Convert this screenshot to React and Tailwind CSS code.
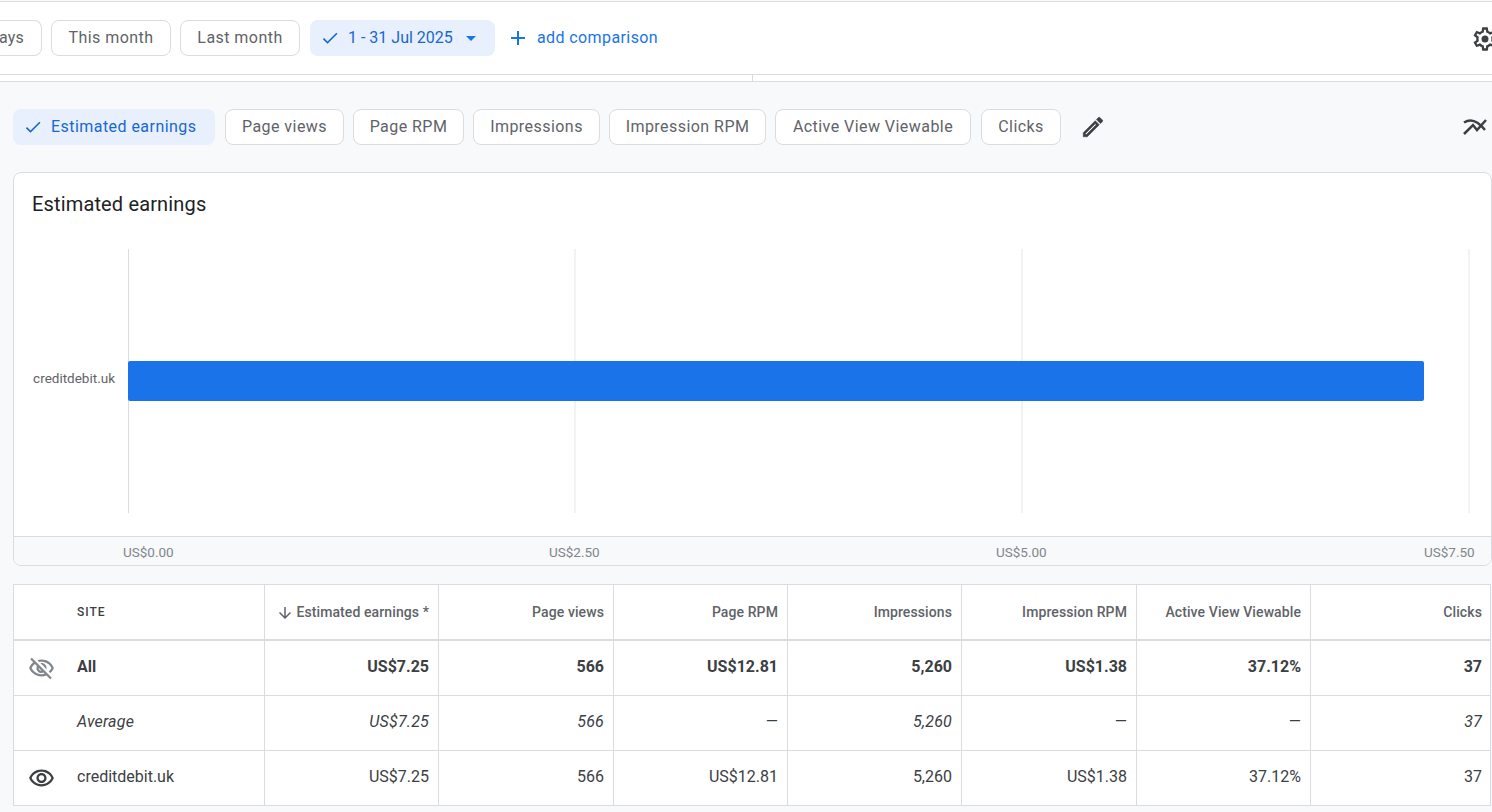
const paths = {
  check: 'M9 16.17L4.83 12l-1.42 1.41L9 19 21 7l-1.41-1.41z',
  add: 'M19 13h-6v6h-2v-6H5v-2h6V5h2v6h6v2z',
  drop: 'M7 10l5 5 5-5z',
  down: 'M20 12l-1.41-1.41L13 16.17V4h-2v12.17l-5.58-5.59L4 12l8 8 8-8z',
  edit: 'M14.06 9.02l.92.92L5.92 19H5v-.92l9.06-9.06M17.66 3c-.25 0-.51.1-.7.29l-1.83 1.83 3.75 3.75 1.83-1.83c.39-.39.39-1.02 0-1.41l-2.34-2.34c-.2-.2-.45-.29-.71-.29zm-3.6 3.19L3 17.25V21h3.75L17.81 9.94l-3.75-3.75z',
  eye: 'M12 6c3.79 0 7.17 2.13 8.82 5.5C19.17 14.87 15.79 17 12 17s-7.17-2.13-8.82-5.5C4.83 8.13 8.21 6 12 6m0-2C7 4 2.73 7.11 1 11.5 2.73 15.89 7 19 12 19s9.27-3.11 11-7.5C21.27 7.11 17 4 12 4zm0 5c1.38 0 2.5 1.12 2.5 2.5S13.38 14 12 14s-2.5-1.12-2.5-2.5S10.62 9 12 9m0-2c-2.48 0-4.5 2.02-4.5 4.5S9.52 16 12 16s4.5-2.02 4.5-4.5S14.48 7 12 7z',
  eyeOff: 'M12 6c3.79 0 7.17 2.13 8.82 5.5-.59 1.22-1.42 2.27-2.41 3.12l1.41 1.41c1.39-1.23 2.49-2.77 3.18-4.53C21.27 7.11 17 4 12 4c-1.27 0-2.49.2-3.64.57l1.65 1.65C10.66 6.09 11.32 6 12 6zm-1.07 1.14L13 9.21c.57.25 1.03.71 1.28 1.28l2.07 2.07c.08-.34.14-.7.14-1.07C16.5 9.01 14.48 7 12 7c-.37 0-.72.05-1.07.14zM2.01 3.87l2.68 2.68C3.06 7.83 1.77 9.53 1 11.5 2.73 15.89 7 19 12 19c1.52 0 2.98-.29 4.32-.82l3.42 3.42 1.41-1.41L3.42 2.45 2.01 3.87zm7.5 7.5l2.61 2.61c-.04.01-.08.02-.12.02-1.38 0-2.5-1.12-2.5-2.5 0-.05.01-.08.01-.13zm-3.4-3.4l1.75 1.75c-.23.55-.36 1.15-.36 1.78 0 2.48 2.02 4.5 4.5 4.5.63 0 1.23-.13 1.77-.36l.98.98c-.88.24-1.8.38-2.75.38-3.79 0-7.17-2.13-8.82-5.5.7-1.43 1.72-2.61 2.93-3.53z',
  gear: 'M19.43 12.98c.04-.32.07-.64.07-.98 0-.34-.03-.66-.07-.98l2.11-1.65c.19-.15.24-.42.12-.64l-2-3.46c-.09-.16-.26-.25-.44-.25-.06 0-.12.01-.17.03l-2.49 1c-.52-.4-1.08-.73-1.69-.98l-.38-2.65C14.46 2.18 14.25 2 14 2h-4c-.25 0-.46.18-.49.42l-.38 2.65c-.61.25-1.17.59-1.69.98l-2.49-1c-.06-.02-.12-.03-.18-.03-.17 0-.34.09-.43.25l-2 3.46c-.13.22-.07.49.12.64l2.11 1.65c-.04.32-.07.65-.07.98 0 .33.03.66.07.98l-2.11 1.65c-.19.15-.24.42-.12.64l2 3.46c.09.16.26.25.44.25.06 0 .12-.01.17-.03l2.49-1c.52.4 1.08.73 1.69.98l.38 2.65c.03.24.24.42.49.42h4c.25 0 .46-.18.49-.42l.38-2.65c.61-.25 1.17-.59 1.69-.98l2.49 1c.06.02.12.03.18.03.17 0 .34-.09.43-.25l2-3.46c.12-.22.07-.49-.12-.64l-2.11-1.65zm-1.98-1.71c.04.31.05.52.05.73 0 .21-.02.43-.05.73l-.14 1.13.89.7 1.08.84-.7 1.21-1.27-.51-1.04-.42-.9.68c-.43.32-.84.56-1.25.73l-1.06.43-.16 1.13-.2 1.35h-1.4l-.19-1.35-.16-1.13-1.06-.43c-.43-.18-.83-.41-1.23-.71l-.91-.7-1.06.43-1.27.51-.7-1.21 1.08-.84.89-.7-.14-1.13c-.03-.31-.05-.54-.05-.74s.02-.43.05-.73l.14-1.13-.89-.7-1.08-.84.7-1.21 1.27.51 1.04.42.9-.68c.43-.32.84-.56 1.25-.73l1.06-.43.16-1.13.2-1.35h1.39l.19 1.35.16 1.13 1.06.43c.43.18.83.41 1.23.71l.91.7 1.06-.43 1.27-.51.7 1.21-1.07.85-.89.7.14 1.13zM12 9a3 3 0 1 0 0 6 3 3 0 0 0 0-6z',
};

function Icon({ name, className }) {
  return (
    <svg viewBox="0 0 24 24" fill="currentColor" className={className}>
      <path d={paths[name]} />
    </svg>
  );
}

function Chip({ label, active, className }) {
  return (
    <div
      className={
        active
          ? 'h-9 flex items-center rounded-lg bg-[#e8f0fe] text-[#1967d2] text-[16px] tracking-[0.45px] ' + className
          : 'h-9 flex items-center justify-center rounded-lg bg-white border border-[#dadce0] text-[#5f6368] text-[16px] tracking-[0.45px] ' + className
      }
    >
      {active && <Icon name="check" className="w-5 h-5 ml-[10px] mr-[8px] shrink-0" />}
      {label}
    </div>
  );
}

const metrics = ['Page views', 'Page RPM', 'Impressions', 'Impression RPM', 'Active View Viewable', 'Clicks'];
const columns = 'grid grid-cols-[251px_174px_175px_174px_174px_175px_174px_180px]';

const rows = [
  { key: 'all', name: 'All', icon: 'eyeOff', iconColor: 'text-[#80868b]', text: 'font-bold text-[#3c4043]', values: ['US$7.25', '566', 'US$12.81', '5,260', 'US$1.38', '37.12%', '37'] },
  { key: 'avg', name: 'Average', text: 'italic tracking-[0.2px] text-[#3c4043]', values: ['US$7.25', '566', '—', '5,260', '—', '—', '37'] },
  { key: 'site', name: 'creditdebit.uk', icon: 'eye', iconColor: 'text-[#3c4043]', text: 'text-[#3c4043]', values: ['US$7.25', '566', 'US$12.81', '5,260', 'US$1.38', '37.12%', '37'] },
];

export default function App() {
  return (
    <div className="w-[1492px] h-[812px] overflow-hidden bg-[#f8f9fb] font-['Roboto',sans-serif]">
      {/* Date bar */}
      <div className="h-[74px] bg-white border-t border-b border-[#dadce0] mt-px flex items-center relative">
        <div className="h-9 w-[42px] flex items-center justify-end pr-[17px] rounded-r-lg bg-white border border-l-0 border-[#dadce0] text-[#5f6368] text-[16px] tracking-[0.2px]">ays</div>
        <Chip label="This month" className="w-[120px] ml-[9px]" />
        <Chip label="Last month" className="w-[120px] ml-[9px]" />
        <div className="h-9 w-[185px] ml-[10px] flex items-center rounded-lg bg-[#e8f0fe] text-[#1967d2] text-[16px]">
          <Icon name="check" className="w-5 h-5 ml-[10px] mr-[8px]" />
          1 - 31 Jul 2025
          <Icon name="drop" className="w-6 h-6 ml-[6px] text-[#1a73e8]" />
        </div>
        <Icon name="add" className="w-6 h-6 ml-[11px] text-[#1a73e8]" />
        <span className="ml-[7px] text-[16px] tracking-[0.4px] text-[#1a73e8]">add comparison</span>
        <Icon name="gear" className="absolute left-[1471px] top-[23px] w-7 h-7 text-[#3c4043]" />
      </div>

      {/* Thin strip */}
      <div className="h-[7px] bg-white border-b border-[#dadce0] flex">
        <div className="w-[753px] border-r border-[#dadce0]" />
      </div>

      {/* Metric chips */}
      <div className="h-[90px] flex items-center pl-[13px]">
        <Chip label="Estimated earnings" active className="w-[202px]" />
        <Chip label={metrics[0]} className="w-[119px] ml-[10px]" />
        <Chip label={metrics[1]} className="w-[111px] ml-[9px]" />
        <Chip label={metrics[2]} className="w-[127px] ml-[9px]" />
        <Chip label={metrics[3]} className="w-[157px] ml-[9px]" />
        <Chip label={metrics[4]} className="w-[196px] ml-[9px]" />
        <Chip label={metrics[5]} className="w-[80px] ml-[10px]" />
        <svg viewBox="0 0 24 24" fill="#3c4043" stroke="#3c4043" strokeWidth="0.5" className="w-[26px] h-[26px] ml-[19px]">
          <path d={paths.edit} />
        </svg>
        <svg viewBox="0 0 24 24" fill="none" stroke="#3c4043" strokeWidth="2.500" className="w-6 h-6 ml-[357px]">
          <path d="M1 7.500Q11 1 22 15" />
          <path d="M1 19L10 10L14 15L23 5" />
        </svg>
      </div>

      {/* Chart card */}
      <div className="ml-[13px] w-[1479px] h-[394px] bg-white border border-[#dadce0] rounded-lg overflow-hidden flex flex-col">
        <div className="h-[77px] pl-[18px] pt-[17px] text-[20px] leading-7 tracking-[0.15px] text-[#202124]">Estimated earnings</div>
        <div className="h-[264px] flex items-center">
          <div className="w-[101px] pb-[7px] text-right text-[13.500px] text-[#5f6368]">creditdebit.uk</div>
          <svg viewBox="0 0 1350 264" className="ml-[13px] w-[1350px] h-[264px]">
            <rect x="0" y="0" width="1" height="264" fill="#dadce0" />
            <rect x="446" y="0" width="2" height="264" fill="#f1f3f4" />
            <rect x="893" y="0" width="2" height="264" fill="#f1f3f4" />
            <rect x="1340" y="0" width="2" height="264" fill="#f1f3f4" />
            <rect x="0" y="112" width="1296" height="40" rx="2" fill="#1a73e8" />
          </svg>
        </div>
        <div className="mt-[23px] h-[29px] pt-px bg-[#f8f9fb] border-t border-[#dadce0] flex items-center text-[13.500px] text-[#80868b] pl-[109px]">
          <span className="w-[426px]">US$0.00</span>
          <span className="w-[447px]">US$2.50</span>
          <span className="w-[428px]">US$5.00</span>
          <span>US$7.50</span>
        </div>
      </div>

      {/* Table */}
      <div className="ml-[13px] mt-[18px] w-[1478px] bg-white border-l border-t border-[#dadce0]">
        <div className={columns + ' h-[56px] border-b-2 border-[#dadce0]'}>
          <div className="border-r border-[#dadce0] pl-[63px] flex items-center text-[12px] font-medium tracking-[1px] text-[#3c4043]">SITE</div>
          <div className="border-r border-[#dadce0] pr-[9px] flex items-center justify-end text-[14px] font-medium tracking-[0.1px] text-[#5f6368]">
            <Icon name="down" className="w-[18px] h-[18px] mr-[2px] mt-[1px]" />
            Estimated earnings *
          </div>
          {metrics.map((m) => (
            <div key={m} className="border-r border-[#dadce0] pr-[9px] last:pr-[8px] flex items-center justify-end text-[14px] font-medium tracking-[0.1px] text-[#5f6368]">{m}</div>
          ))}
        </div>
        {rows.map((row) => (
          <div key={row.key} className={columns + ' h-[55px] border-b border-[#dadce0] text-[16px] ' + row.text}>
            <div className="border-r border-[#dadce0] flex items-center">
              <div className="w-[63px] pl-[14px] flex items-center">
                {row.icon && <Icon name={row.icon} className={'w-[27px] h-[27px] ' + row.iconColor} />}
              </div>
              <span className="pb-[3px]">{row.name}</span>
            </div>
            {row.values.map((v, i) => (
              <div key={i} className="border-r border-[#dadce0] pr-[9px] last:pr-[8px] pb-[3px] flex items-center justify-end">{v}</div>
            ))}
          </div>
        ))}
      </div>
    </div>
  );
}
